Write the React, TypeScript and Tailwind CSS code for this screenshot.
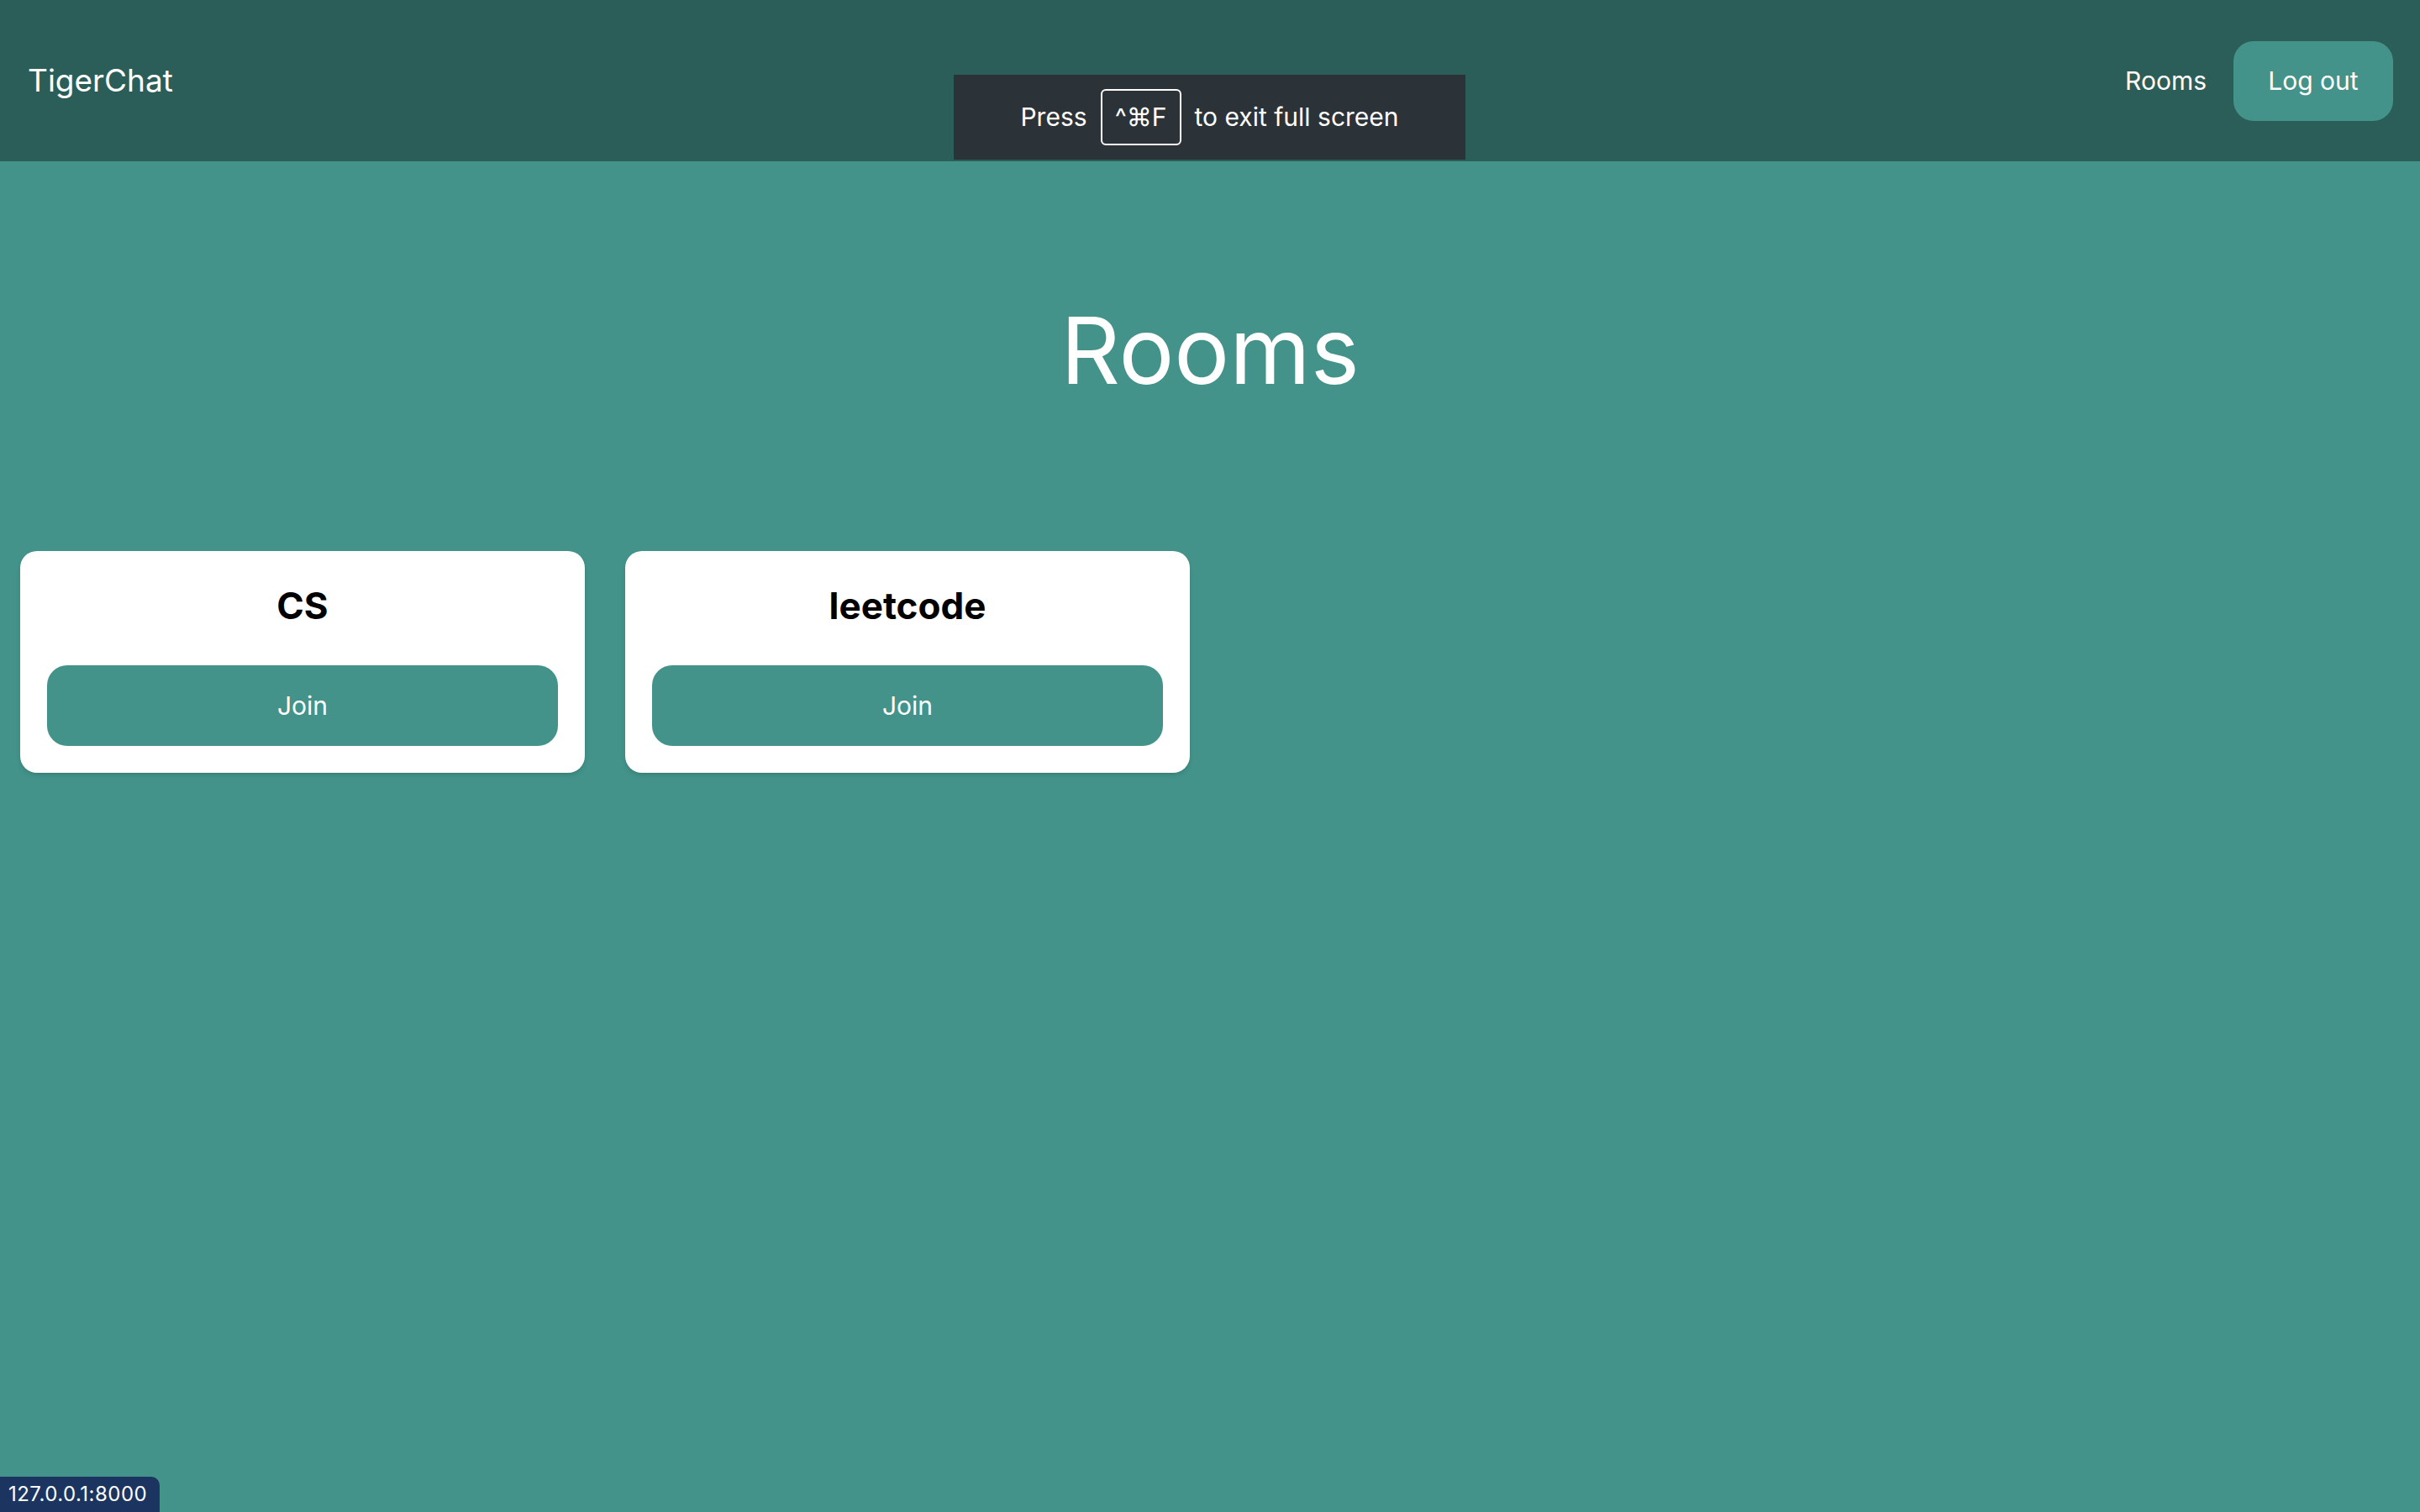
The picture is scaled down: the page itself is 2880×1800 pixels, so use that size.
import React from "react";

const rooms = [{ id: 1, name: "CS" }, { id: 2, name: "leetcode" }];

const RoomCard = ({ name }: { name: string }) => {
  return (
    <div className="w-[672px] h-[264px] bg-white rounded-[20px] shadow-md px-8 pt-[29px] pb-8 flex flex-col">
      <h3 className="text-center text-[44px] leading-[72px] font-bold text-black">
        {name}
      </h3>
      <button className="mt-[35px] h-[96px] w-full rounded-[24px] bg-[#43938a] text-white text-[30px]">
        Join
      </button>
    </div>
  );
};

const App = () => {
  return (
    <div className="relative min-h-screen bg-[#43938a] font-['Inter',sans-serif]">
      {/* Navbar */}
      <nav className="h-[192px] bg-[#2c5e59] flex items-center justify-between pl-[33px] pr-8">
        <a href="#" className="text-[37px] text-white">
          TigerChat
        </a>
        <div className="flex items-center gap-8">
          <a href="#" className="text-[30px] text-white">
            Rooms
          </a>
          <button className="h-[95px] w-[190px] rounded-[24px] bg-[#43938a] text-white text-[30px]">
            Log out
          </button>
        </div>
      </nav>

      <main>
        <h1 className="mt-[170px] text-center text-[110px] leading-none text-white">
          Rooms
        </h1>
        <div className="mt-[184px] flex gap-12 px-6">
          {rooms.map((room) => (
            <RoomCard key={room.id} name={room.name} />
          ))}
        </div>
      </main>

      {/* full screen notice */}
      <div className="absolute left-[1135px] top-[89px] w-[609px] h-[101px] bg-[#2b3339] flex items-center justify-center gap-4 text-white text-[30px]">
        <span>Press</span>
        <span className="h-[67px] w-[96px] flex items-center justify-center border-2 border-white rounded-[6px] text-[30px] font-['Inter','DejaVu_Sans',sans-serif]">
          ^⌘F
        </span>
        <span>to exit full screen</span>
      </div>

      {/* status bar */}
      <div className="absolute left-0 bottom-0 h-[42px] pl-[10px] pr-[15px] flex items-center bg-[#1b3560] rounded-tr-[10px] text-white text-[24px] tracking-[0.02em]">
        127.0.0.1:8000
      </div>
    </div>
  );
};

export default App;
